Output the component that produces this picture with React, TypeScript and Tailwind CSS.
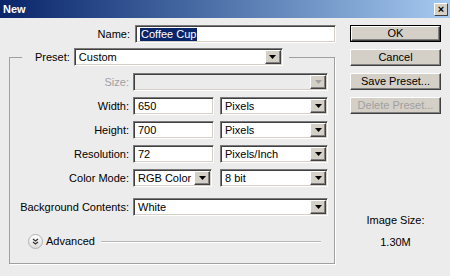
import React from "react";

const font = { fontFamily: '"Liberation Sans", Arial, sans-serif' };

function Arrow({ disabled }: { disabled?: boolean }) {
  return (
    <div className="w-[16px] h-full bg-[#d4d0c8] border border-t-white border-l-white border-r-[#404040] border-b-[#404040] shadow-[inset_-1px_-1px_0_#808080] flex items-center justify-center">
      <svg width="7" height="4" viewBox="0 0 7 4">
        <polygon points="0,0 7,0 3.5,4" fill={disabled ? "#a0a0a0" : "#000"} />
      </svg>
    </div>
  );
}

function Sunken({ className, children, disabled }: { className: string; children?: React.ReactNode; disabled?: boolean }) {
  return (
    <div
      className={`h-[18px] flex items-stretch border border-t-[#7a7a7a] border-l-[#7a7a7a] border-r-white border-b-white shadow-[inset_1px_1px_0_#404040,inset_-1px_-1px_0_#d4d0c8] p-[1px] ${
        disabled ? "bg-[#ebebeb]" : "bg-white"
      } ${className}`}
    >
      {children}
    </div>
  );
}

function Select({ className, text, disabled }: { className: string; text?: string; disabled?: boolean }) {
  return (
    <Sunken className={className} disabled={disabled}>
      <span className="flex-1 pl-[3px] leading-[14px] text-black truncate">{text}</span>
      <Arrow disabled={disabled} />
    </Sunken>
  );
}

function Input({ className, text }: { className: string; text: string }) {
  return (
    <Sunken className={className}>
      <span className="flex-1 pl-[3px] leading-[14px] text-black">{text}</span>
    </Sunken>
  );
}

function Row({ label, children, disabled, className = "" }: { label: string; children: React.ReactNode; disabled?: boolean; className?: string }) {
  return (
    <div className={`flex items-center gap-[4px] ${className}`}>
      <div className={`w-[107px] shrink-0 flex justify-end whitespace-nowrap ${disabled ? "text-[#a0a0a0]" : "text-black"}`}>
        <span>{label}</span>
      </div>
      {children}
    </div>
  );
}

function Btn({ children, def, disabled }: { children: React.ReactNode; def?: boolean; disabled?: boolean }) {
  return (
    <div className={`w-[91px] h-[17px] ${def ? "border border-black" : ""}`}>
      <div
        className={`w-full h-full bg-[#d4d0c8] border border-t-white border-l-white border-r-[#404040] border-b-[#404040] shadow-[inset_-1px_-1px_0_#808080] flex items-center justify-center leading-none ${
          disabled ? "text-[#a0a0a0]" : "text-black"
        }`}
      >
        {children}
      </div>
    </div>
  );
}

export default function App() {
  return (
    <div className="w-[450px] h-[276px] bg-[#ececec] text-[11px] text-black overflow-hidden flex flex-col" style={font}>
      {/* Title bar */}
      <div className="h-[18px] shrink-0 flex items-center justify-between bg-gradient-to-r from-[#0a246a] to-[#a6caf0] pl-[3px] pr-[2px]">
        <span className="text-white font-bold text-[11px]">New</span>
        <div className="w-[14px] h-[13px] bg-[#d4d0c8] border border-t-white border-l-white border-r-[#404040] border-b-[#404040] flex items-center justify-center text-[11px] font-bold leading-none text-black">
          ×
        </div>
      </div>

      <div className="flex">
        {/* Left column */}
        <div className="pl-[9px] w-[337px] flex flex-col">
          <div className="flex items-center gap-[5px] mt-[7px]">
            <span className="w-[121px] text-right">Name:</span>
            <Sunken className="w-[201px]">
              <span className="pl-[3px] flex items-center">
                <span className="bg-[#0a246a] text-white leading-[13px] px-[1px]">Coffee Cup</span>
              </span>
            </Sunken>
          </div>

          <fieldset className="mt-[5px] w-[326px] border border-[#a0a0a0] shadow-[1px_1px_0_white] pl-[12px] pr-[5px] pb-[14px]">
            <legend className="pl-[13px] pr-[6px]">
              <div className="flex items-center gap-[4px]">
                <span>Preset:</span>
                <Select className="w-[209px]" text="Custom" />
              </div>
            </legend>

            <div className="flex flex-col gap-[6px] mt-[7px]">
              <Row label="Size:" disabled>
                <Select className="w-[195px]" disabled />
              </Row>
              <Row label="Width:">
                <Input className="w-[81px]" text="650" />
                <Select className="w-[108px] ml-[2px]" text="Pixels" />
              </Row>
              <Row label="Height:">
                <Input className="w-[81px]" text="700" />
                <Select className="w-[108px] ml-[2px]" text="Pixels" />
              </Row>
              <Row label="Resolution:">
                <Input className="w-[81px]" text="72" />
                <Select className="w-[108px] ml-[2px]" text="Pixels/Inch" />
              </Row>
              <Row label="Color Mode:">
                <Select className="w-[79px]" text="RGB Color" />
                <Select className="w-[108px] ml-[4px]" text="8 bit" />
              </Row>
              <Row label="Background Contents:" className="mt-[5px]">
                <Select className="w-[195px]" text="White" />
              </Row>
            </div>

            <div className="flex items-center mt-[18px] ml-[6px] h-[15px]">
              <div className="w-[15px] h-[15px] rounded-full bg-gradient-to-b from-white to-[#dcdcdc] border border-[#b0b0b0] flex items-center justify-center">
                <svg width="7" height="7" viewBox="0 0 7 7">
                  <polyline points="1,1 3.5,3 6,1" fill="none" stroke="#333" strokeWidth="1.2" />
                  <polyline points="1,4 3.5,6 6,4" fill="none" stroke="#333" strokeWidth="1.2" />
                </svg>
              </div>
              <span className="ml-[3px]">Advanced</span>
              <div className="ml-[6px] w-[220px] h-[2px] border-t border-[#b8b8b8] border-b border-b-white" />
            </div>
          </fieldset>
        </div>

        {/* Right column */}
        <div className="ml-[13px] pt-[7px] flex flex-col items-center w-[91px]">
          <div className="flex flex-col gap-[7px]">
            <Btn def>OK</Btn>
            <Btn>Cancel</Btn>
            <Btn>Save Preset...</Btn>
            <Btn disabled>Delete Preset...</Btn>
          </div>
          <div className="mt-[100px] leading-[13px]">Image Size:</div>
          <div className="mt-[9px] leading-[13px]">1.30M</div>
        </div>
      </div>
    </div>
  );
}
